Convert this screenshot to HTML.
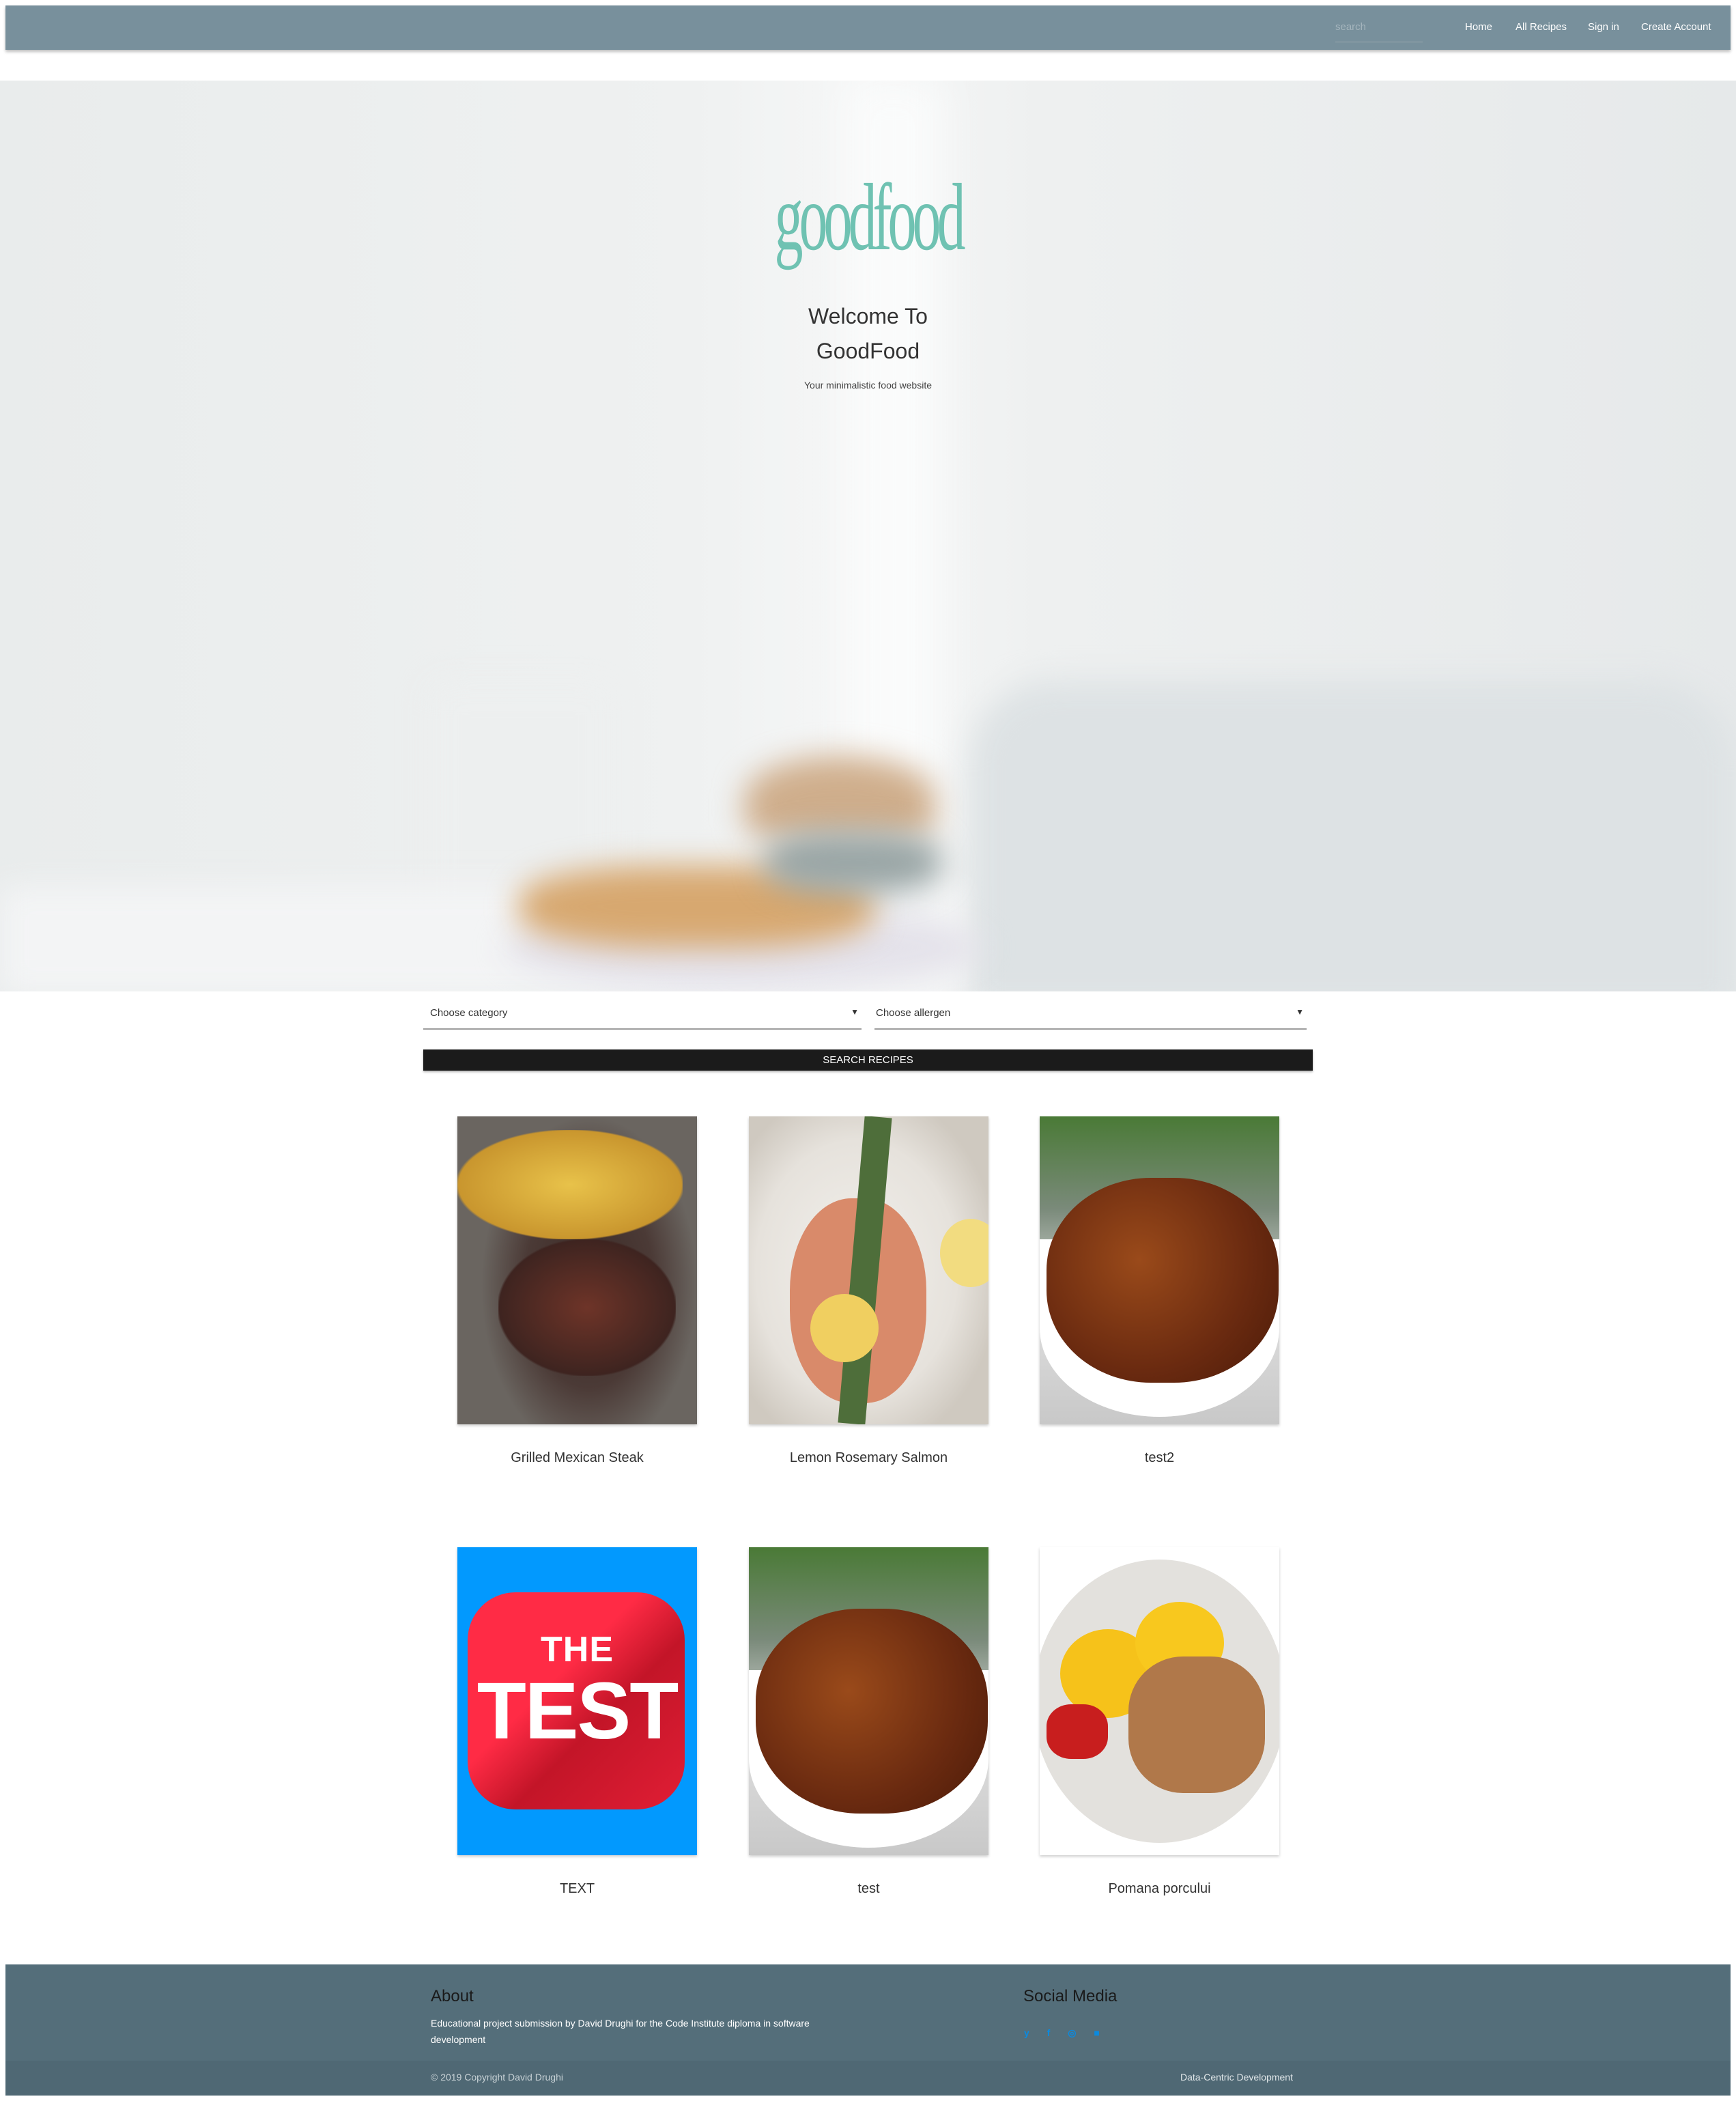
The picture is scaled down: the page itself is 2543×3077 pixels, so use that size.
<!DOCTYPE html>
<html><head><meta charset="utf-8"><style>
*{margin:0;padding:0;box-sizing:border-box}
body{width:2543px;height:3077px;background:#fff;font-family:"Liberation Sans",sans-serif;position:relative;overflow:hidden}
.abs{position:absolute}
.nav{left:8px;top:8px;width:2527px;height:65px;background:#78909c;box-shadow:0 3px 4px rgba(0,0,0,.25)}
.nav span{position:absolute;top:23px;color:#fff;font-size:15px}
.hero{left:0;top:118px;width:2543px;height:1334px;overflow:hidden;background:linear-gradient(90deg,#e9ecec 0%,#eff1f1 40%,#f6f7f7 50%,#eef0f0 60%,#e6e9ea 100%)}
.blur{position:absolute;filter:blur(22px)}
.t{position:absolute;text-align:center;width:100%;color:#222}
.sel{top:1470px;height:38px;border-bottom:2px solid #9e9e9e;font-size:15px;color:#333}
.card{position:absolute;width:351px;height:451px;box-shadow:0 2px 4px rgba(0,0,0,.2);overflow:hidden}
.cap{position:absolute;width:351px;text-align:center;font-size:20px;color:#333}
.foot{left:8px;top:2877px;width:2527px;height:192px;background:#546e7a}
</style></head><body>
<div class="abs nav">
 <span style="left:1948px;color:#a5b5bd">search</span>
 <div class="abs" style="left:1948px;top:53px;width:128px;height:1px;background:#9aa8ae"></div>
 <span style="left:2138px">Home</span>
 <span style="left:2212px">All Recipes</span>
 <span style="left:2318px">Sign in</span>
 <span style="left:2396px">Create Account</span>
</div>
<div class="abs hero">
 <div class="blur" style="left:1240px;top:0;width:140px;height:1334px;background:#fafbfb;filter:blur(30px)"></div>
 <div class="blur" style="left:630px;top:880px;width:270px;height:390px;background:#edefef;border-radius:20px"></div>
 <div class="blur" style="left:1420px;top:880px;width:1120px;height:480px;background:#dde2e4;border-radius:120px 120px 0 0"></div>
 <div class="blur" style="left:0;top:1180px;width:1400px;height:160px;background:#f3f4f5"></div>
 <div class="blur" style="left:740px;top:1210px;width:700px;height:120px;background:#e4e2ea;border-radius:50%"></div>
 <div class="blur" style="left:760px;top:1150px;width:520px;height:120px;background:#d7a870;border-radius:40%"></div>
 <div class="blur" style="left:1090px;top:990px;width:280px;height:120px;background:#cfae8c;border-radius:50% 50% 20% 20%"></div>
 <div class="blur" style="left:1120px;top:1100px;width:260px;height:90px;background:#9aa6a6;border-radius:40%"></div>
 <div class="t" style="top:120px;font-family:'Liberation Serif',serif;font-size:140px;color:#6fc2b2;letter-spacing:-10px;transform:scaleX(.6);font-weight:normal">goodfood</div>
 <div class="t" style="top:320px;font-size:32px;line-height:51px;color:#333">Welcome To<br>GoodFood</div>
 <div class="t" style="top:438px;font-size:14px;color:#444">Your minimalistic food website</div>
</div>
<div class="abs sel" style="left:620px;width:642px"><span style="position:absolute;left:10px;top:5px">Choose category</span><span style="position:absolute;right:4px;top:5px;font-size:12px">▼</span></div>
<div class="abs sel" style="left:1281px;width:633px"><span style="position:absolute;left:2px;top:5px">Choose allergen</span><span style="position:absolute;right:4px;top:5px;font-size:12px">▼</span></div>
<div class="abs" style="left:620px;top:1537px;width:1303px;height:31px;background:#1b1b1b;color:#fff;text-align:center;font-size:15px;line-height:31px;box-shadow:0 2px 3px rgba(0,0,0,.3)">SEARCH RECIPES</div>

<div class="card" style="left:670px;top:1635px;background:radial-gradient(ellipse 45% 55% at 55% 55%,#3a2a26 0%,#4b3a36 60%,#6a6560 100%)">
 <div class="abs" style="left:0;top:20px;width:330px;height:160px;background:radial-gradient(ellipse at 50% 50%,#e8c24a,#c9962e 70%,transparent 72%)"></div>
 <div class="abs" style="left:60px;top:180px;width:260px;height:200px;background:radial-gradient(ellipse,#6e3428,#3e2420 70%,transparent 72%)"></div>
</div>
<div class="cap" style="left:670px;top:2124px">Grilled Mexican Steak</div>

<div class="card" style="left:1097px;top:1635px;background:radial-gradient(ellipse 60% 60% at 45% 50%,#f2f0ec,#e6e2dc 70%,#cfc9c0)">
 <div class="abs" style="left:60px;top:120px;width:200px;height:300px;border-radius:45%;background:#d98a6a"></div>
 <div class="abs" style="left:150px;top:0;width:40px;height:451px;background:#4e6e3a;transform:rotate(5deg)"></div>
 <div class="abs" style="left:90px;top:260px;width:100px;height:100px;border-radius:50%;background:#f0cf60"></div>
 <div class="abs" style="left:280px;top:150px;width:90px;height:100px;border-radius:50%;background:#f2dc80"></div>
</div>
<div class="cap" style="left:1097px;top:2124px">Lemon Rosemary Salmon</div>

<div class="card" style="left:1523px;top:1635px;background:linear-gradient(#4a7a36 0,#7a8a7a 30%,#e0e0e0 60%,#c8c8c8)">
 <div class="abs" style="left:0;top:180px;width:351px;height:260px;border-radius:0 0 50% 50%;background:#fff"></div>
 <div class="abs" style="left:10px;top:90px;width:340px;height:300px;border-radius:45%;background:radial-gradient(circle at 40% 40%,#9a4a1a,#6a2a10 60%,#4a1a08)"></div>
</div>
<div class="cap" style="left:1523px;top:2124px">test2</div>

<div class="card" style="left:670px;top:2266px;background:#0299fe">
 <div class="abs" style="left:15px;top:66px;width:318px;height:318px;border-radius:70px;background:linear-gradient(135deg,#ff2b45 40%,#c31528 60%,#e11e35)"></div>
 <div class="abs" style="left:0;width:351px;text-align:center;top:120px;color:#fff;font-weight:bold;font-size:52px;letter-spacing:1px">THE</div>
 <div class="abs" style="left:0;width:351px;text-align:center;top:175px;color:#fff;font-weight:bold;font-size:118px;letter-spacing:-2px;line-height:130px">TEST</div>
</div>
<div class="cap" style="left:670px;top:2755px">TEXT</div>

<div class="card" style="left:1097px;top:2266px;background:linear-gradient(#4a7a36 0,#7a8a7a 30%,#e0e0e0 60%,#c8c8c8)">
 <div class="abs" style="left:0;top:180px;width:351px;height:260px;border-radius:0 0 50% 50%;background:#fff"></div>
 <div class="abs" style="left:10px;top:90px;width:340px;height:300px;border-radius:45%;background:radial-gradient(circle at 40% 40%,#9a4a1a,#6a2a10 60%,#4a1a08)"></div>
</div>
<div class="cap" style="left:1097px;top:2755px">test</div>

<div class="card" style="left:1523px;top:2266px;background:#fff">
 <div class="abs" style="left:-10px;top:18px;width:371px;height:415px;border-radius:50%;background:#e3e1dd"></div>
 <div class="abs" style="left:30px;top:120px;width:140px;height:130px;border-radius:50%;background:#f6c21a"></div>
 <div class="abs" style="left:140px;top:80px;width:130px;height:120px;border-radius:50%;background:#f8c81e"></div>
 <div class="abs" style="left:130px;top:160px;width:200px;height:200px;border-radius:40%;background:#b0784a"></div>
 <div class="abs" style="left:10px;top:230px;width:90px;height:80px;border-radius:40%;background:#c81e1e"></div>
</div>
<div class="cap" style="left:1523px;top:2755px">Pomana porcului</div>

<div class="abs foot">
 <div class="abs" style="left:0;top:141px;width:2527px;height:51px;background:#4f6874"></div>
 <div class="abs" style="left:623px;top:33px;font-size:24px;color:#1a1a1a">About</div>
 <div class="abs" style="left:623px;top:74px;font-size:14px;color:#fff;line-height:24px;width:620px">Educational project submission by David Drughi for the Code Institute diploma in software development</div>
 <div class="abs" style="left:1491px;top:33px;font-size:24px;color:#1a1a1a">Social Media</div>
 <div class="abs" style="left:1492px;top:92px;font-size:14px;color:#0a8ae0;font-weight:bold;word-spacing:22px">y f ◎ ■</div>
 <div class="abs" style="left:623px;top:157px;font-size:14px;color:#c8d2d6">© 2019 Copyright David Drughi</div>
 <div class="abs" style="left:1721px;top:157px;font-size:14px;color:#e0e6e8">Data-Centric Development</div>
</div>
</body></html>
